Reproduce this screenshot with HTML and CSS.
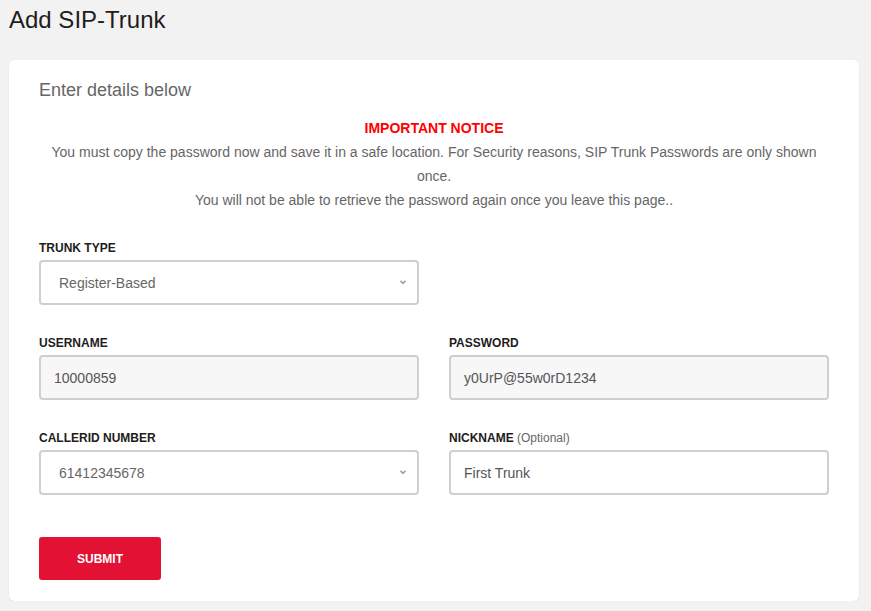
FILE: index.html
```html
<!DOCTYPE html>
<html>
<head>
<meta charset="utf-8">
<link rel="stylesheet" href="styles.css">
</head>
<body>
<div class="page">
  <h1 class="title">Add SIP-Trunk</h1>
  <div class="card">
    <h2 class="subtitle">Enter details below</h2>
    <div class="notice">
      <div class="notice-head">IMPORTANT NOTICE</div>
      <p>You must copy the password now and save it in a safe location. For Security reasons, SIP Trunk Passwords are only shown once.</p>
      <p>You will not be able to retrieve the password again once you leave this page..</p>
    </div>
    <form class="form">
      <div class="grid">
        <div class="field">
          <label class="label">TRUNK TYPE</label>
          <div class="select-wrap">
            <select class="control select"><option>Register-Based</option></select>
            <svg class="chev" width="8" height="6" viewBox="0 0 8 6"><path d="M1.5 1.8 L4 4.3 L6.5 1.8" fill="none" stroke="#98a5b6" stroke-width="1.7"/></svg>
          </div>
        </div>
        <div></div>
        <div class="field">
          <label class="label">USERNAME</label>
          <input class="control input readonly" value="10000859" readonly>
        </div>
        <div class="field">
          <label class="label">PASSWORD</label>
          <input class="control input readonly" value="y0UrP@55w0rD1234" readonly>
        </div>
        <div class="field">
          <label class="label">CALLERID NUMBER</label>
          <div class="select-wrap">
            <select class="control select"><option>61412345678</option></select>
            <svg class="chev" width="8" height="6" viewBox="0 0 8 6"><path d="M1.5 1.8 L4 4.3 L6.5 1.8" fill="none" stroke="#98a5b6" stroke-width="1.7"/></svg>
          </div>
        </div>
        <div class="field">
          <label class="label">NICKNAME <span class="opt">(Optional)</span></label>
          <input class="control input" value="First Trunk">
        </div>
      </div>
      <button type="button" class="submit">SUBMIT</button>
    </form>
  </div>
</div>
</body>
</html>
```
FILE: styles.css
```css
html, body {
  margin: 0;
  padding: 0;
  background: #f2f2f2;
  font-family: "Liberation Sans", Arial, sans-serif;
}
.page {
  padding: 6px 12px 0 9px;
}
.title {
  margin: 0;
  font-size: 24px;
  line-height: 28px;
  font-weight: normal;
  color: #221c1c;
}
.card {
  margin-top: 26px;
  background: #fff;
  border-radius: 6px;
  box-shadow: 0 2px 3px rgba(0,0,0,0.06);
  padding: 19px 30px 21px 30px;
}
.subtitle {
  margin: 0;
  font-size: 18px;
  line-height: 22px;
  font-weight: normal;
  color: #666;
}
.notice {
  margin-top: 15px;
  text-align: center;
  font-size: 14px;
  line-height: 24px;
  color: #666;
}
.notice-head {
  color: #f00;
  font-weight: bold;
}
.notice p {
  margin: 0;
}
.form {
  margin-top: 29px;
}
.grid {
  display: grid;
  grid-template-columns: 1fr 1fr;
  column-gap: 30px;
  row-gap: 31px;
}
.field {
  display: flex;
  flex-direction: column;
}
.label {
  font-size: 12px;
  line-height: 14px;
  font-weight: bold;
  color: #221c1c;
  margin-bottom: 5px;
}
.opt {
  font-weight: normal;
  color: #666;
}
.control {
  box-sizing: border-box;
  height: 45px;
  width: 100%;
  border: 2px solid #cfcfcf;
  border-radius: 4px;
  font-family: "Liberation Sans", Arial, sans-serif;
  font-size: 14px;
  color: #555;
  background: #fff;
  outline: none;
}
.select-wrap {
  position: relative;
}
.select {
  appearance: none;
  -webkit-appearance: none;
  padding: 0 30px 0 18px;
  color: #666;
}
.chev {
  position: absolute;
  right: 12px;
  top: 19px;
}
.input {
  padding: 0 13px;
}
.readonly {
  background: #f7f7f7;
}
.submit {
  margin-top: 42px;
  width: 122px;
  height: 43px;
  border: none;
  border-radius: 3px;
  background: #e31134;
  color: #fff;
  font-family: "Liberation Sans", Arial, sans-serif;
  font-size: 12px;
  font-weight: bold;
  cursor: pointer;
  display: block;
}
```
